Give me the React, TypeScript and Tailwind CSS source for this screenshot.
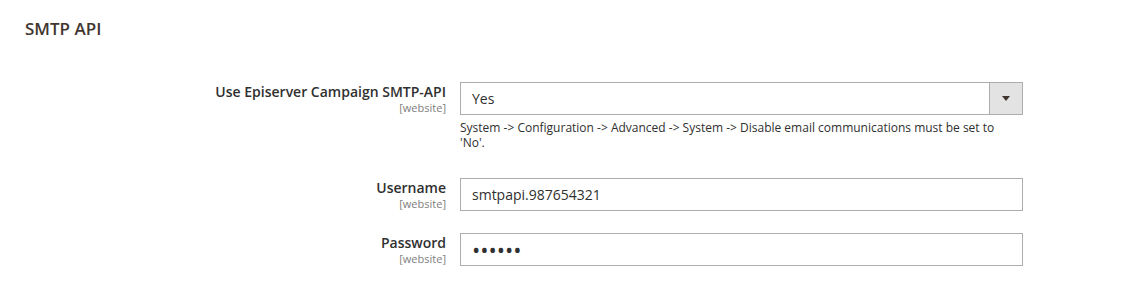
import React from "react";

const font = { fontFamily: '"Open Sans", "Liberation Sans", sans-serif' };

function Label({ text }: { text: string }) {
  return (
    <div className="w-[421px] shrink-0 text-right pt-[1px]">
      <div className="text-[14px] font-semibold leading-[18px] text-[#303030]">{text}</div>
      <div className="text-[11px] leading-[13px] text-[#808080]">[website]</div>
    </div>
  );
}

export default function App() {
  return (
    <div className="w-[1125px] h-[290px] bg-white" style={font}>
      <div className="pl-[25px] pt-[18px]">
        <h2 className="text-[17px] font-semibold leading-[22px] text-[#41362f]">SMTP API</h2>

        <div className="mt-[42px] flex">
          <Label text="Use Episerver Campaign SMTP-API" />
          <div className="ml-[14px] w-[563px]">
            <div className="flex h-[33px] border border-[#adadad] bg-white">
              <div className="flex-1 pl-[11px] text-[14px] leading-[31px] text-[#303030]">Yes</div>
              <div className="flex w-[33px] items-center justify-center border-l border-[#adadad] bg-[#e3e3e3]">
                <svg width="8" height="5" viewBox="0 0 8 5">
                  <path d="M0 0H8L4 5Z" fill="#41362f" />
                </svg>
              </div>
            </div>
            <p className="mt-[5px] w-[545px] text-[12px] leading-[15px] text-[#303030]">
              System -&gt; Configuration -&gt; Advanced -&gt; System -&gt; Disable email communications must be set to 'No'.
            </p>
          </div>
        </div>

        <div className="mt-[28px] flex">
          <Label text="Username" />
          <div className="ml-[14px] w-[563px]">
            <div className="h-[33px] border border-[#adadad] pl-[11px] text-[14px] leading-[31px] text-[#303030]">
              smtpapi.987654321
            </div>
          </div>
        </div>

        <div className="mt-[22px] flex">
          <Label text="Password" />
          <div className="ml-[14px] w-[563px]">
            <div className="h-[33px] border border-[#adadad] pl-[11px] text-[22px] leading-[31px] text-[#303030]">
              ••••••
            </div>
          </div>
        </div>
      </div>
    </div>
  );
}
